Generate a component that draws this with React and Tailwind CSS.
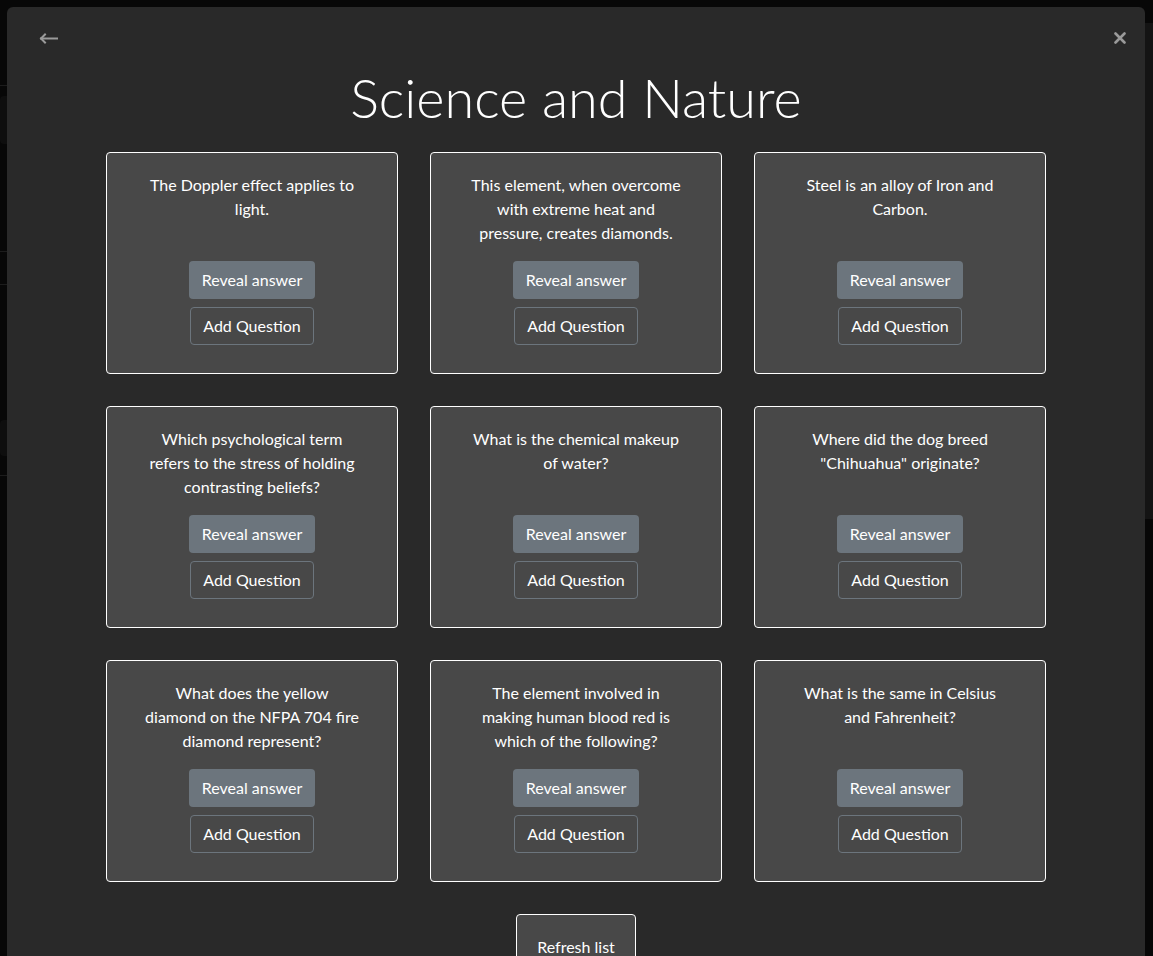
import React from 'react';

const questions = [
  ['The Doppler effect applies to', 'light.'],
  ['This element, when overcome', 'with extreme heat and', 'pressure, creates diamonds.'],
  ['Steel is an alloy of Iron and', 'Carbon.'],
  ['Which psychological term', 'refers to the stress of holding', 'contrasting beliefs?'],
  ['What is the chemical makeup', 'of water?'],
  ['Where did the dog breed', '"Chihuahua" originate?'],
  ['What does the yellow', 'diamond on the NFPA 704 fire', 'diamond represent?'],
  ['The element involved in', 'making human blood red is', 'which of the following?'],
  ['What is the same in Celsius', 'and Fahrenheit?'],
];

const QuestionCard = ({ lines }) => (
  <div className="h-[222px] rounded border border-white bg-[#484848] pt-[20px] flex flex-col items-center">
    <p className="h-[72px] text-center text-white text-[16px] leading-6">
      {lines.map((l, i) => (
        <span key={i} className="block">{l}</span>
      ))}
    </p>
    <button className="mt-[16px] h-[38px] w-[126px] rounded bg-[#6c757d] text-white text-[16px]">
      Reveal answer
    </button>
    <button className="mt-[8px] h-[38px] w-[124px] rounded border border-[#6c757d] text-white text-[16px]">
      Add Question
    </button>
  </div>
);

export default function App() {
  return (
    <div className="relative h-[956px] overflow-hidden bg-[#070707] font-['Lato','Noto_Sans',sans-serif]">
      {/* page behind the modal */}
      <div className="flex h-full">
        <div className="flex-1 flex flex-col">
          <div className="h-[86px] border-b border-[#1c1c1c]" />
          <div className="h-[166px] border-b border-[#1c1c1c] pt-[10px]">
            <div className="h-[48px] bg-[#0e0e0e] rounded" />
          </div>
          <div className="h-[33px] border-b border-[#1c1c1c]" />
          <div className="h-[191px] border-b border-[#1c1c1c] pt-[135px]">
            <div className="h-[36px] bg-[#0e0e0e] rounded" />
          </div>
        </div>
        <div className="w-[300px] pt-[23px]">
          <div className="h-[496px] bg-[#141414] rounded-tl" />
        </div>
      </div>

      {/* modal */}
      <div className="absolute left-[7px] right-[8px] top-[7px] h-[1000px] rounded-md bg-[#292929]">
        <div className="flex items-center justify-between pl-[32px] pr-[19px] pt-[25px]">
          <svg width="19" height="11" viewBox="0 0 19 11" fill="none" stroke="#9a9a9a" strokeWidth="2" strokeLinecap="square">
            <path d="M2 5.5h16" />
            <path d="M6 1.5 L2 5.5 L6 9.5" />
          </svg>
          <svg width="12" height="12" viewBox="0 0 12 12" fill="none" stroke="#9a9a9a" strokeWidth="2.6" strokeLinecap="round">
            <path d="M1.5 1.5l9 9M10.5 1.5l-9 9" />
          </svg>
        </div>

        <h1 className="mt-[20px] text-center text-white text-[54px] leading-[67px] font-light">
          Science and Nature
        </h1>

        <div className="mx-auto mt-[21px] w-[940px] grid grid-cols-3 gap-[32px]">
          {questions.map((q, i) => (
            <QuestionCard key={i} lines={q} />
          ))}
        </div>

        <div className="mt-[32px] flex justify-center">
          <button className="rounded border border-white bg-[#484848] px-[20px] pt-[20px] pb-[20px] text-white text-[16px] leading-6">
            Refresh list
          </button>
        </div>
      </div>
    </div>
  );
}
